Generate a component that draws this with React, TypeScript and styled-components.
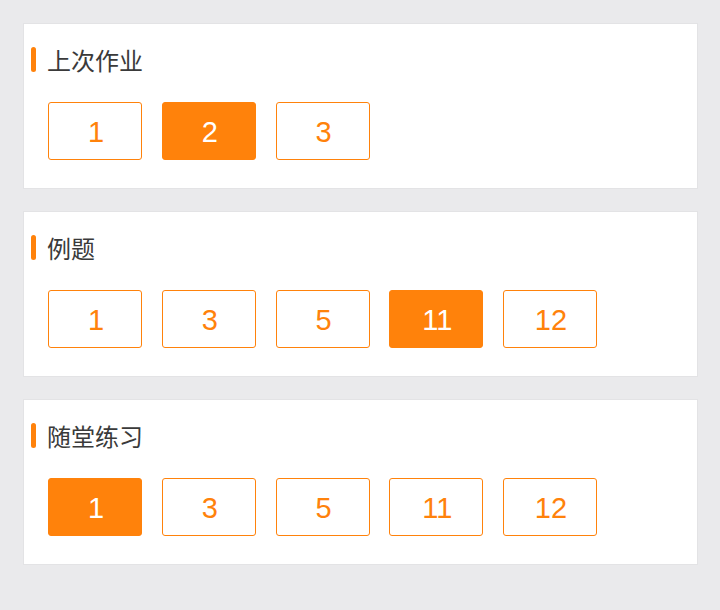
import React from "react";
import styled, { createGlobalStyle } from "styled-components";

const Global = createGlobalStyle`
  html, body { margin: 0; padding: 0; background: #eaeaec; }
  body { font-family: "Liberation Sans", "Noto Sans CJK SC", sans-serif; }
`;

const Page = styled.div`
  display: flex;
  flex-direction: column;
  gap: 22px;
  padding: 23px 22px 0 23px;
`;

const Card = styled.section`
  background: #fff;
  border: 1px solid #e3e3e5;
  padding: 23px 0 28px 7px;
  height: 166px;
  box-sizing: border-box;
`;

const TitleRow = styled.div`
  display: flex;
  align-items: center;
  height: 25px;
  gap: 11px;
`;

const Bar = styled.span`
  width: 5px;
  height: 25px;
  border-radius: 3px;
  background: #ff820b;
`;

const Title = styled.h2`
  margin: 0;
  font-family: "Noto Sans CJK SC", sans-serif;
  font-weight: 400;
  font-size: 24px;
  line-height: 25px;
  color: #3a3a3a;
`;

const Buttons = styled.div`
  display: flex;
  gap: 19.75px;
  margin-top: 30px;
  padding-left: 17px;
`;

const NumButton = styled.button<{ $active?: boolean }>`
  width: 94px;
  height: 58px;
  box-sizing: border-box;
  border-radius: 3px;
  border: 1px solid #ff820b;
  background: ${(p) => (p.$active ? "#ff820b" : "#fff")};
  color: ${(p) => (p.$active ? "#fff" : "#ff820b")};
  font-family: "Liberation Sans", Arial, sans-serif;
  font-size: 29px;
  line-height: 58px;
  padding: 0 0 0 2px;
  cursor: pointer;
`;

const sections = [
  { title: "上次作业", items: ["1", "2", "3"], active: 1 },
  { title: "例题", items: ["1", "3", "5", "11", "12"], active: 3 },
  { title: "随堂练习", items: ["1", "3", "5", "11", "12"], active: 0 },
];

export default function App() {
  return (
    <>
      <Global />
      <Page>
        {sections.map((s) => (
          <Card key={s.title}>
            <TitleRow>
              <Bar />
              <Title>{s.title}</Title>
            </TitleRow>
            <Buttons>
              {s.items.map((n, i) => (
                <NumButton key={n} $active={i === s.active}>
                  {n}
                </NumButton>
              ))}
            </Buttons>
          </Card>
        ))}
      </Page>
    </>
  );
}
